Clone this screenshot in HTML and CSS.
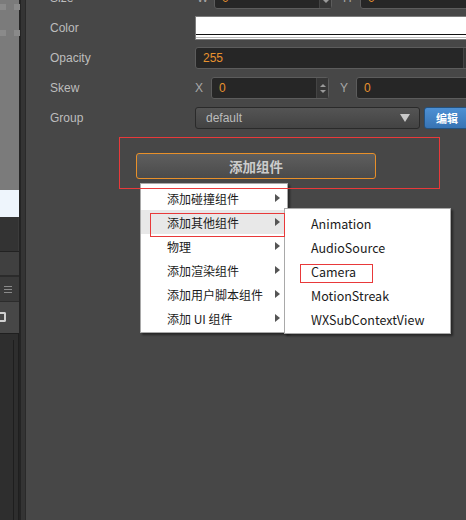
FILE: index.html
```html
<!DOCTYPE html>
<html>
<head>
<meta charset="utf-8">
<link rel="stylesheet" href="styles.css">
</head>
<body>
<div class="app">
  <div class="left">
    <div class="scene">
      <span class="sq sq1"></span><span class="sq sq2"></span><span class="sq sq3"></span><span class="sq sq4"></span>
    </div>
    <div class="preview"></div>
    <div class="grid-area"></div>
    <div class="blank-area"></div>
    <div class="panel-head"><span class="burger"><i></i><i></i><i></i></span></div>
    <div class="panel-tool"><span class="tool-icon"></span></div>
    <div class="panel-body"><span class="vline"></span></div>
  </div>
  <div class="divider"></div>
  <div class="inspector">
    <div class="row row-size">
      <span class="label">Size</span>
      <span class="axis axis-w">W</span>
      <span class="field field-short"><span class="val">0</span><span class="spin"><b class="up"></b><b class="down"></b></span></span>
      <span class="axis axis-h">H</span>
      <span class="field field-grow"><span class="val">0</span></span>
    </div>
    <div class="row">
      <span class="label">Color</span>
      <span class="color-box"><span class="color-line"></span></span>
    </div>
    <div class="row">
      <span class="label">Opacity</span>
      <span class="field field-grow"><span class="val">255</span><span class="spin"><b class="up"></b><b class="down"></b></span></span>
    </div>
    <div class="row">
      <span class="label">Skew</span>
      <span class="axis">X</span>
      <span class="field field-short"><span class="val">0</span><span class="spin"><b class="up"></b><b class="down"></b></span></span>
      <span class="axis axis-y">Y</span>
      <span class="field field-grow"><span class="val">0</span></span>
    </div>
    <div class="row">
      <span class="label">Group</span>
      <span class="select"><span class="select-text">default</span><span class="caret"></span></span>
      <span class="edit-btn">编辑</span>
    </div>
    <div class="add-area">
      <div class="add-btn">添加组件</div>
    </div>
  </div>

  <div class="menu menu-main">
    <div class="mi">添加碰撞组件<span class="arr"></span></div>
    <div class="mi mi-hl">添加其他组件<span class="arr"></span></div>
    <div class="mi">物理<span class="arr"></span></div>
    <div class="mi">添加渲染组件<span class="arr"></span></div>
    <div class="mi">添加用户脚本组件<span class="arr"></span></div>
    <div class="mi">添加 UI 组件<span class="arr"></span></div>
  </div>
  <div class="menu menu-sub">
    <div class="mi">Animation</div>
    <div class="mi">AudioSource</div>
    <div class="mi">Camera</div>
    <div class="mi">MotionStreak</div>
    <div class="mi">WXSubContextView</div>
  </div>

  <div class="mark mark-area"></div>
  <div class="mark mark-other"></div>
  <div class="mark mark-camera"></div>
</div>
</body>
</html>
```
FILE: styles.css
```css
html, body {
  margin: 0;
  padding: 0;
  background: #474747;
}
.app {
  position: relative;
  width: 466px;
  height: 520px;
  overflow: hidden;
  display: flex;
  font-family: "Liberation Sans", Arial, sans-serif;
}
.left {
  width: 19px;
  display: flex;
  flex-direction: column;
  flex: none;
}
.scene {
  height: 190px;
  background: #7b7b7b;
  position: relative;
}
.sq {
  position: absolute;
  width: 6px;
  height: 6px;
  background: #8a8a8a;
}
.sq1 { left: 0; top: 4px; }
.sq2 { left: 14px; top: 4px; }
.sq3 { left: 0; top: 30px; }
.sq4 { left: 14px; top: 30px; }
.preview {
  height: 27px;
  background: #eef5fc;
}
.grid-area {
  height: 34px;
  background: #333333;
  border-bottom: 1px solid #222;
  box-shadow: inset -6px 0 0 -5px #3b3b3b;
}
.blank-area {
  height: 23px;
  background: #404040;
  border-bottom: 2px solid #2b2b2b;
}
.panel-head {
  height: 24px;
  background: #3a3a3a;
  border-bottom: 1px solid #2c2c2c;
  display: flex;
  align-items: center;
}
.burger {
  margin-left: 4px;
  display: flex;
  flex-direction: column;
  gap: 2px;
}
.burger i {
  display: block;
  width: 8px;
  height: 1px;
  background: #8a8a8a;
}
.panel-tool {
  height: 31px;
  background: #474747;
  display: flex;
  align-items: center;
}
.tool-icon {
  width: 4px;
  height: 6px;
  border: 2px solid #cfcfcf;
  border-left: none;
  border-radius: 0 2px 2px 0;
  margin-top: -2px;
}
.panel-body {
  flex: 1;
  background: #2e2e2e;
  border-top: 1px solid #1f1f1f;
  border-right: 1px solid #1f1f1f;
  position: relative;
}
.vline {
  position: absolute;
  left: 13px;
  top: 6px;
  bottom: 0;
  width: 1px;
  background: #1e1e1e;
}
.divider {
  width: 7px;
  flex: none;
  background: #343434;
  border-left: 2px solid #242424;
  border-right: 1px solid #2a2a2a;
  box-sizing: border-box;
}
.inspector {
  flex: 1;
  padding-left: 24px;
  display: flex;
  flex-direction: column;
  min-width: 0;
}
.row {
  height: 30px;
  display: flex;
  align-items: center;
  margin-right: -10px;
  flex: none;
}
.row-size {
  margin-top: -17px;
}
.label {
  width: 145px;
  flex: none;
  color: #bdbdbd;
  font-size: 12px;
}
.axis {
  width: 16px;
  flex: none;
  color: #a8a8a8;
  font-size: 12px;
}
.axis-w { width: 19px; padding-left: 2px; box-sizing: border-box; }
.axis-y { margin-left: 11px; }
.axis-h { margin-left: 11px; width: 17px; }
.field {
  height: 22px;
  box-sizing: border-box;
  background: #262626;
  border: 1px solid #5c5c5c;
  border-radius: 3px;
  display: flex;
  align-items: center;
  position: relative;
}
.field-short { width: 118px; flex: none; }
.field-grow { flex: 1; }
.val {
  flex: 1;
  padding-left: 7px;
  color: #e8922e;
  font-size: 12px;
}
.spin {
  width: 11px;
  align-self: stretch;
  background: #363636;
  border-left: 1px solid #444;
  display: flex;
  flex-direction: column;
  align-items: center;
  justify-content: center;
  gap: 3px;
}
.spin b {
  display: block;
  width: 0;
  height: 0;
  border-left: 3px solid transparent;
  border-right: 3px solid transparent;
}
.spin .up { border-bottom: 3px solid #9a9a9a; }
.spin .down { border-top: 3px solid #9a9a9a; }
.color-box {
  flex: 1;
  height: 24px;
  box-sizing: border-box;
  border: 1px solid #7c7c7c;
  background: #ffffff;
  position: relative;
}
.color-line {
  position: absolute;
  left: 0;
  right: 0;
  top: 17px;
  height: 1px;
  background: #111;
  box-shadow: 0 3px 0 0 #bdbdbd;
}
.select {
  width: 225px;
  height: 22px;
  flex: none;
  box-sizing: border-box;
  border: 1px solid #2a2a2a;
  border-radius: 3px;
  background: linear-gradient(#545454, #434343);
  display: flex;
  align-items: center;
  padding: 0 9px 0 10px;
}
.select-text {
  flex: 1;
  color: #bcbcbc;
  font-size: 12px;
}
.caret {
  width: 0;
  height: 0;
  border-left: 5px solid transparent;
  border-right: 5px solid transparent;
  border-top: 8px solid #c8c8c8;
}
.edit-btn {
  margin-left: 4px;
  width: 50px;
  height: 22px;
  flex: none;
  box-sizing: border-box;
  border: 1px solid #24527f;
  border-radius: 3px;
  background: linear-gradient(#4d90d4, #3874b4);
  color: #ffffff;
  font-family: "Noto Sans CJK SC", sans-serif;
  font-size: 11px;
  font-weight: bold;
  display: flex;
  align-items: center;
  justify-content: center;
  padding-right: 4px;
}
.add-area {
  margin-top: 4px;
  margin-left: 69px;
  width: 321px;
  height: 51px;
  box-sizing: border-box;
  padding: 16px 0 0 17px;
  flex: none;
}
.add-btn {
  width: 240px;
  height: 26px;
  box-sizing: border-box;
  border: 1px solid #e8902a;
  border-radius: 3px;
  background: linear-gradient(#5e5e5e, #4b4b4b);
  color: #cccccc;
  font-family: "Noto Sans CJK SC", sans-serif;
  font-weight: bold;
  font-size: 13.5px;
  display: flex;
  align-items: center;
  justify-content: center;
}
.menu {
  position: absolute;
  background: #ffffff;
  border: 1px solid #a9a9a9;
  box-sizing: border-box;
  box-shadow: 2px 2px 2px rgba(0, 0, 0, 0.45);
  font-family: "Noto Sans CJK SC", sans-serif;
  font-size: 12px;
  color: #1b1b1b;
}
.menu-main {
  left: 140px;
  top: 183px;
  width: 148px;
  height: 150px;
  padding-top: 2px;
}
.menu-sub {
  left: 284px;
  top: 208px;
  width: 167px;
  height: 126px;
  padding-top: 2px;
}
.mi {
  height: 24px;
  display: flex;
  align-items: center;
  padding-left: 26px;
  position: relative;
}
.menu-sub .mi { padding-left: 26px; font-size: 12.5px; }
.mi-hl {
  background: #e8e8e8;
}
.arr {
  position: absolute;
  left: 134px;
  top: 8px;
  width: 0;
  height: 0;
  border-top: 4px solid transparent;
  border-bottom: 4px solid transparent;
  border-left: 5px solid #555555;
}
.mark {
  position: absolute;
  border: 1px solid #e8393a;
  box-sizing: border-box;
}
.mark-area { left: 119px; top: 137px; width: 321px; height: 52px; }
.mark-other { left: 150px; top: 213px; width: 135px; height: 24px; }
.mark-camera { left: 300px; top: 264px; width: 73px; height: 19px; }
```
